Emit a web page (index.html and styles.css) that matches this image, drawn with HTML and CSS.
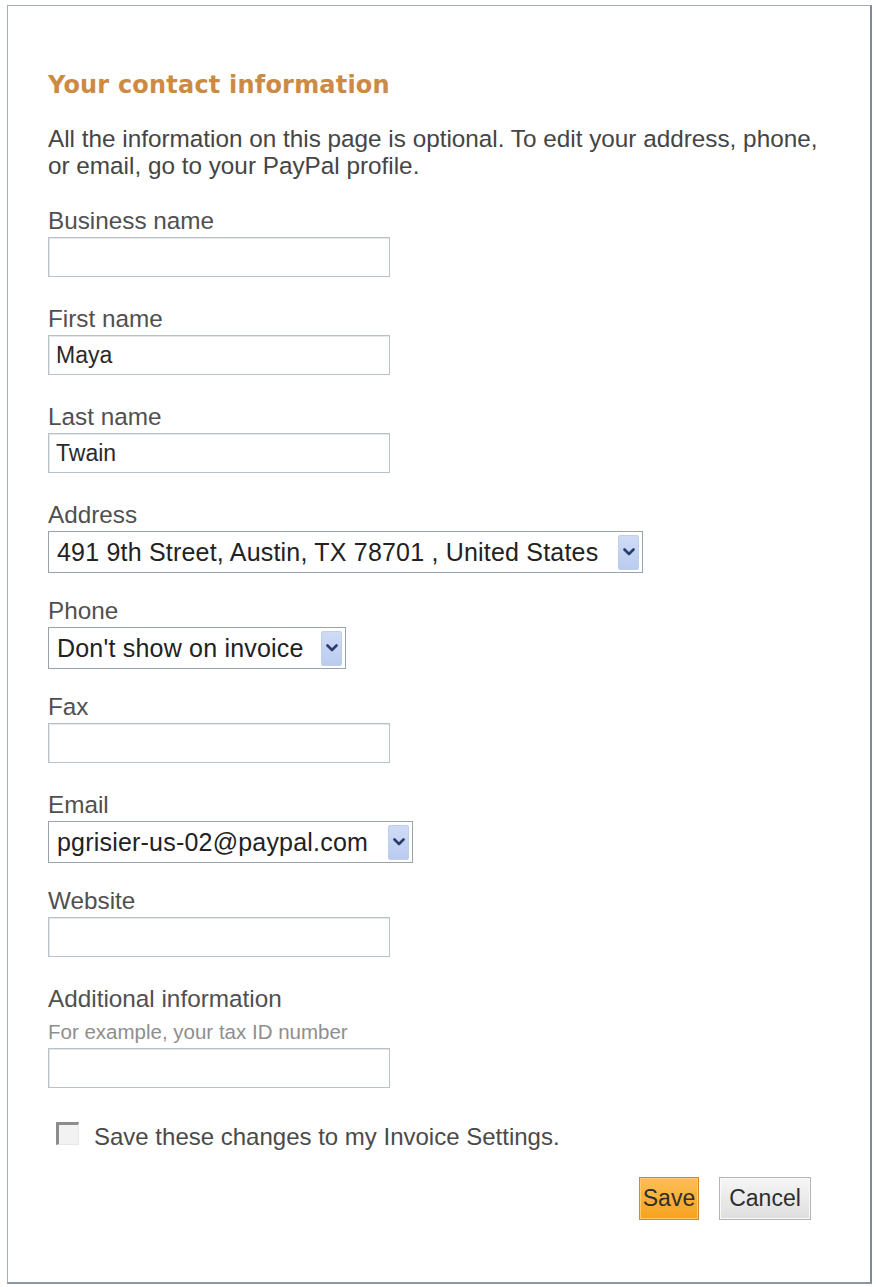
FILE: index.html
```html
<!DOCTYPE html>
<html lang="en">
<head>
<meta charset="utf-8">
<title>Your contact information</title>
<link rel="stylesheet" href="styles.css">
</head>
<body>
<div class="frame">
  <h1 class="title">Your contact information</h1>
  <p class="intro">All the information on this page is optional. To edit your address, phone,<br>or email, go to your PayPal profile.</p>

  <div class="field">
    <label class="label">Business name</label>
    <input class="input" type="text" value="">
  </div>
  <div class="field">
    <label class="label">First name</label>
    <input class="input" type="text" value="Maya">
  </div>
  <div class="field">
    <label class="label">Last name</label>
    <input class="input" type="text" value="Twain">
  </div>
  <div class="field field-select">
    <label class="label">Address</label>
    <div class="select select-address">
      <span class="select-text">491 9th Street, Austin, TX 78701 , United States</span>
      <span class="select-btn"><svg width="12" height="8" viewBox="0 0 12 8"><path d="M1.5 1.5 L6 6 L10.5 1.5" fill="none" stroke="#2b3d6e" stroke-width="2.6" stroke-linecap="round" stroke-linejoin="round"/></svg></span>
    </div>
  </div>
  <div class="field field-select">
    <label class="label">Phone</label>
    <div class="select select-phone">
      <span class="select-text">Don't show on invoice</span>
      <span class="select-btn"><svg width="12" height="8" viewBox="0 0 12 8"><path d="M1.5 1.5 L6 6 L10.5 1.5" fill="none" stroke="#2b3d6e" stroke-width="2.6" stroke-linecap="round" stroke-linejoin="round"/></svg></span>
    </div>
  </div>
  <div class="field">
    <label class="label">Fax</label>
    <input class="input" type="text" value="">
  </div>
  <div class="field field-select">
    <label class="label">Email</label>
    <div class="select select-email">
      <span class="select-text">pgrisier-us-02@paypal.com</span>
      <span class="select-btn"><svg width="12" height="8" viewBox="0 0 12 8"><path d="M1.5 1.5 L6 6 L10.5 1.5" fill="none" stroke="#2b3d6e" stroke-width="2.6" stroke-linecap="round" stroke-linejoin="round"/></svg></span>
    </div>
  </div>
  <div class="field">
    <label class="label">Website</label>
    <input class="input" type="text" value="">
  </div>
  <div class="field">
    <label class="label">Additional information</label>
    <div class="hint">For example, your tax ID number</div>
    <input class="input" type="text" value="">
  </div>

  <div class="check-row">
    <span class="checkbox"></span>
    <span class="check-text">Save these changes to my Invoice Settings.</span>
  </div>

  <div class="actions">
    <button class="btn btn-save" type="button">Save</button>
    <button class="btn btn-cancel" type="button">Cancel</button>
  </div>
</div>
</body>
</html>
```

FILE: styles.css
```css
html, body {
  margin: 0;
  padding: 0;
  background: #ffffff;
}

body {
  font-family: "Liberation Sans", Arial, sans-serif;
  font-size: 24px;
  color: #4a4a4a;
}

.frame {
  box-sizing: border-box;
  margin: 5px 0 0 7px;
  width: 865px;
  height: 1279px;
  border: 1px solid #a3aeb9;
  border-right: 2px solid #7d8a97;
  border-bottom: 2px solid #8a96a2;
  padding: 64px 20px 0 40px;
  display: flex;
  flex-direction: column;
  align-items: flex-start;
}

.title {
  margin: 0;
  font-family: "DejaVu Sans", Verdana, sans-serif;
  font-weight: bold;
  font-size: 24px;
  line-height: 30px;
  letter-spacing: 0.2px;
  color: #cc8a44;
}

.intro {
  margin: 25px 0 0 0;
  font-size: 24.3px;
  line-height: 27px;
  white-space: nowrap;
  color: #454545;
}

.field {
  display: flex;
  flex-direction: column;
  align-items: flex-start;
  margin-top: 29px;
}

.label {
  display: block;
  font-size: 24.3px;
  line-height: 26px;
  margin-bottom: 3px;
  color: #505050;
}

.hint {
  font-size: 20.5px;
  line-height: 22px;
  color: #8e8e8e;
  margin-top: 6px;
  margin-bottom: 5px;
}

.input {
  box-sizing: border-box;
  width: 342px;
  height: 40px;
  margin: 0;
  border: 1px solid #b9c1c8;
  box-shadow: inset 1px 1px 0 #e4e8ec;
  background: #fff;
  padding: 0 7px;
  font-family: "Liberation Sans", Arial, sans-serif;
  font-size: 23px;
  color: #2a2a2a;
  outline: none;
}

.field-select + .field {
  margin-top: 25px;
}

.select {
  box-sizing: border-box;
  height: 42px;
  border: 1px solid #9aa3ab;
  background: #fff;
  display: flex;
  align-items: center;
  padding: 0 3px 0 8px;
  gap: 4px;
}

.select-address { width: 595px; }
.select-phone { width: 298px; }
.select-email { width: 365px; }

.select-text {
  flex: 1;
  font-size: 25px;
  letter-spacing: 0.2px;
  color: #222;
  white-space: nowrap;
}

.select-btn {
  box-sizing: border-box;
  width: 21px;
  height: 35px;
  background: linear-gradient(#cfdcf7, #b9cbef);
  border: 1px solid #c0cdeb;
  border-radius: 2px;
  display: flex;
  align-items: center;
  justify-content: center;
}

.check-row {
  display: flex;
  align-items: flex-start;
  margin-top: 36px;
  margin-left: 8px;
}

.checkbox {
  box-sizing: border-box;
  width: 23px;
  height: 23px;
  margin-top: -2px;
  border-top: 3px solid #8c8c8c;
  border-left: 3px solid #8c8c8c;
  border-right: 1px solid #e8e8e8;
  border-bottom: 1px solid #e8e8e8;
  background: #f2f2f2;
}

.check-text {
  margin-left: 15px;
  line-height: 26px;
  color: #4a4a4a;
}

.actions {
  align-self: flex-end;
  display: flex;
  gap: 20px;
  margin-top: 27px;
  margin-right: 39px;
}

.btn {
  box-sizing: border-box;
  height: 43px;
  padding: 0;
  font-family: "Liberation Sans", Arial, sans-serif;
  font-size: 23px;
  color: #2e2e2e;
  cursor: pointer;
}

.btn-save {
  width: 60px;
  background: linear-gradient(#fdbe55, #f7a21f);
  border: 1px solid #cf8a2a;
  box-shadow: inset 0 0 0 1px #ffc96e;
}

.btn-cancel {
  width: 92px;
  background: linear-gradient(#f6f6f6, #dedede);
  border: 1px solid #b3b3b3;
  box-shadow: inset 0 0 0 1px #fafafa;
}
```
